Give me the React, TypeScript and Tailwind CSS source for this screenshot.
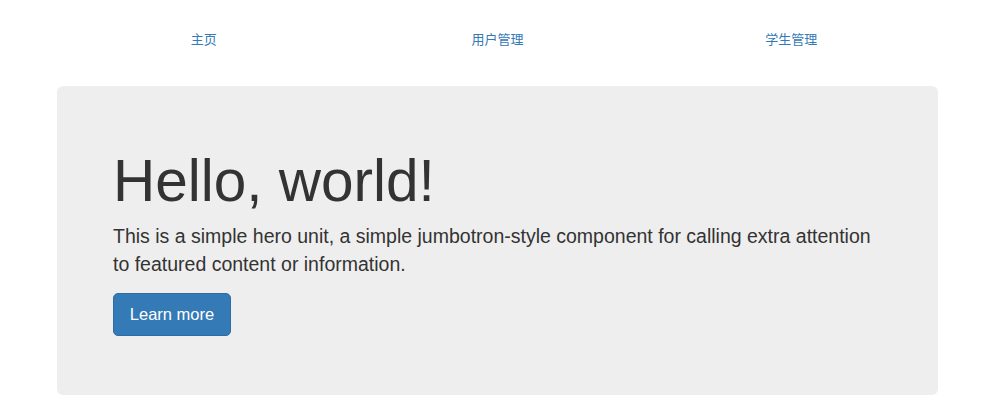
import React from 'react';

const links = ['主页', '用户管理', '学生管理'];

const App: React.FC = () => {
    return (
        <div className="min-h-[417px] bg-white font-['Liberation_Sans','Noto_Sans_CJK_SC',sans-serif] text-[#333]">
            <div className="ml-[57px] w-[881px]">
                <nav className="grid h-[80px] grid-cols-3 items-center">
                    {links.map((label) => (
                        <a key={label} href="#" className="text-center text-[13px] text-[#337ab7]">
                            {label}
                        </a>
                    ))}
                </nav>
                <div className="mt-[6px] h-[309px] rounded-[6px] bg-[#eeeeee] px-[56px] pt-[63px]">
                    <h1 className="text-[58.5px] leading-[1.1]">Hello, world!</h1>
                    <p className="mt-[9px] text-[19.5px] leading-[28px]">
                        This is a simple hero unit, a simple jumbotron-style component for calling extra attention to featured content or information.
                    </p>
                    <button className="mt-[15px] h-[43px] w-[118px] rounded-[5px] border border-[#2e6da4] bg-[#337ab7] text-[16.5px] text-white">
                        Learn more
                    </button>
                </div>
            </div>
        </div>
    );
};

export default App;
